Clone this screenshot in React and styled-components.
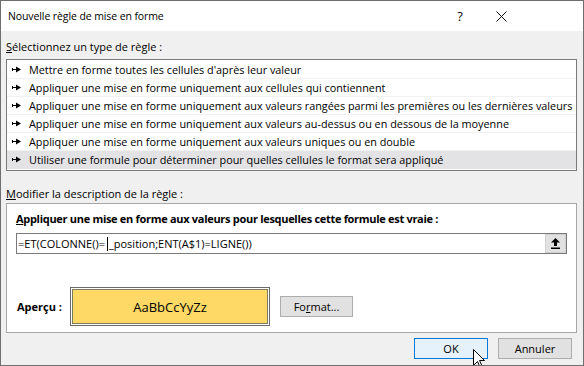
import React from "react";
import styled, { createGlobalStyle } from "styled-components";

const GlobalStyle = createGlobalStyle`
  html, body { margin: 0; padding: 0; background: #ffffff; }
  body {
    font-family: "Open Sans", "Noto Sans", sans-serif;
    font-size: 11px;
    color: #000000;
  }
  * { box-sizing: border-box; }
`;

const Dialog = styled.div`
  position: relative;
  width: 584px;
  height: 366px;
  border: 1px solid #6f6f6f;
  background: #f0f0f0;
  display: flex;
  flex-direction: column;
  overflow: hidden;
`;

const TitleBar = styled.div`
  height: 30px;
  flex: none;
  background: #ffffff;
  display: flex;
  align-items: center;
  padding-left: 7px;
  padding-right: 67px;
`;

const Title = styled.div`
  flex: 1;
  font-size: 10.5px;
  letter-spacing: -0.1px;
  white-space: nowrap;
`;

const TitleControls = styled.div`
  display: flex;
  align-items: center;
  gap: 11px;
`;

const TitleButton = styled.div`
  width: 30px;
  height: 30px;
  display: flex;
  align-items: center;
  justify-content: center;
  font-size: 13px;
  color: #111;
`;

const Body = styled.div`
  flex: 1;
  display: flex;
  flex-direction: column;
  padding: 0 6px 0 5px;
`;

const SectionLabel = styled.div`
  line-height: 16px;
  height: 16px;
  margin-top: ${(p) => p.$top}px;
  white-space: nowrap;
`;

const ListBox = styled.div`
  margin-top: 4px;
  height: 112px;
  border: 1px solid #7a7a7a;
  background: #ffffff;
  padding: 1px 0;
  display: flex;
  flex-direction: column;
  overflow: hidden;
`;

const ListRow = styled.div`
  height: 18px;
  flex: none;
  display: flex;
  align-items: center;
  gap: 8px;
  padding-left: 5px;
  white-space: nowrap;
  font-size: 10.85px;
  background: ${(p) => (p.$selected ? "#e3e3e6" : "transparent")};
  border-bottom: 1px solid ${(p) => (p.$last ? "transparent" : "#f1f1f1")};
`;

const RowArrow = styled.svg`
  flex: none;
`;

const GroupBox = styled.div`
  margin-top: 1px;
  height: 130px;
  border: 1px solid #a8a8a8;
  background: #ffffff;
  padding: 7px 9px 6px 9px;
  display: flex;
  flex-direction: column;
`;

const BoldLabel = styled.div`
  font-weight: 700;
  line-height: 16px;
  height: 16px;
  letter-spacing: -0.3px;
  white-space: nowrap;
`;

const FormulaInput = styled.div`
  margin-top: 6px;
  height: 21px;
  border: 1px solid #7a7a7a;
  display: flex;
  align-items: center;
`;

const FormulaText = styled.div`
  flex: 1;
  padding-left: 1px;
  white-space: nowrap;
  display: flex;
  align-items: center;
`;

const Caret = styled.span`
  display: inline-block;
  width: 1px;
  height: 14px;
  margin: 0 1px 0 2px;
  background: #000;
`;

const PickerButton = styled.div`
  width: 21px;
  height: 19px;
  background: #e1e1e1;
  border: 1px solid #d0d0d0;
  display: flex;
  align-items: center;
  justify-content: center;
`;

const PreviewRow = styled.div`
  margin-top: 33px;
  display: flex;
  align-items: center;
  padding-left: 1px;
`;

const PreviewLabel = styled.div`
  width: 53px;
  font-weight: 700;
  white-space: nowrap;
`;

const PreviewFrame = styled.div`
  width: 200px;
  height: 39px;
  border: 1px solid #6a6a6a;
  padding: 1px;
  background: #ffffff;
`;

const PreviewSwatch = styled.div`
  height: 100%;
  background: #ffd966;
  border: 1px solid #7c7c5c;
  display: flex;
  align-items: center;
  justify-content: center;
  font-size: 13px;
`;

const Button = styled.div`
  width: ${(p) => p.$width}px;
  height: 21px;
  margin-left: ${(p) => p.$ml || 0}px;
  border: 1px solid ${(p) => (p.$default ? "#0078d7" : "#adadad")};
  background: ${(p) => (p.$default ? "#e5f1fb" : "#e1e1e1")};
  display: flex;
  align-items: center;
  justify-content: center;
  white-space: nowrap;
`;

const Footer = styled.div`
  margin-top: 5px;
  display: flex;
  justify-content: flex-end;
  gap: 10px;
  padding-right: 5px;
`;

const Cursor = styled.svg`
  position: absolute;
  left: 472px;
  top: 348px;
`;

const Arrow = () => (
  <RowArrow width="9" height="7" viewBox="0 0 9 7">
    <rect x="0" y="2" width="1" height="3" fill="#000" />
    <rect x="0" y="3" width="5" height="1" fill="#000" />
    <polygon points="4,0.5 9,3.5 4,6.5" fill="#000" />
  </RowArrow>
);

const rules = [
  "Mettre en forme toutes les cellules d'après leur valeur",
  "Appliquer une mise en forme uniquement aux cellules qui contiennent",
  "Appliquer une mise en forme uniquement aux valeurs rangées parmi les premières ou les dernières valeurs",
  "Appliquer une mise en forme uniquement aux valeurs au-dessus ou en dessous de la moyenne",
  "Appliquer une mise en forme uniquement aux valeurs uniques ou en double",
  "Utiliser une formule pour déterminer pour quelles cellules le format sera appliqué",
];

export default function App() {
  return (
    <>
      <GlobalStyle />
      <Dialog>
        <TitleBar>
          <Title>Nouvelle règle de mise en forme</Title>
          <TitleControls>
            <TitleButton>?</TitleButton>
            <TitleButton>
              <svg width="11" height="11" viewBox="0 0 11 11">
                <path d="M0.5 0.5 L10.5 10.5 M10.5 0.5 L0.5 10.5" stroke="#111" strokeWidth="1" />
              </svg>
            </TitleButton>
          </TitleControls>
        </TitleBar>
        <Body>
          <SectionLabel $top={8}>
            <u>S</u>électionnez un type de règle :
          </SectionLabel>
          <ListBox>
            {rules.map((r, i) => (
              <ListRow key={i} $selected={i === rules.length - 1} $last={i === rules.length - 1}>
                <Arrow />
                <span>{r}</span>
              </ListRow>
            ))}
          </ListBox>
          <SectionLabel $top={15}>
            <u>M</u>odifier la description de la règle :
          </SectionLabel>
          <GroupBox>
            <BoldLabel>
              <u>A</u>ppliquer une mise en forme aux valeurs pour lesquelles cette formule est vraie :
            </BoldLabel>
            <FormulaInput>
              <FormulaText>
                <span>=ET(COLONNE()=</span>
                <Caret />
                <span>_position;ENT(A$1)=LIGNE())</span>
              </FormulaText>
              <PickerButton>
                <svg width="9" height="11" viewBox="0 0 9 11">
                  <polygon points="4.5,0 9,4.5 6,4.5 6,8 3,8 3,4.5 0,4.5" fill="#000" />
                  <rect x="0" y="9.5" width="9" height="1.5" fill="#000" />
                </svg>
              </PickerButton>
            </FormulaInput>
            <PreviewRow>
              <PreviewLabel>Aperçu :</PreviewLabel>
              <PreviewFrame>
                <PreviewSwatch>AaBbCcYyZz</PreviewSwatch>
              </PreviewFrame>
              <Button $width={73} $ml={10}>
                Fo<u>r</u>mat...
              </Button>
            </PreviewRow>
          </GroupBox>
          <Footer>
            <Button $width={74} $default>
              OK
            </Button>
            <Button $width={74}>Annuler</Button>
          </Footer>
        </Body>
        <Cursor width="13" height="20" viewBox="0 0 13 20">
          <path
            d="M0.5 0.5 L0.5 16.5 L4.5 12.5 L7.5 19 L9.5 18 L6.5 11.5 L11.5 11.5 Z"
            fill="#ffffff"
            stroke="#000000"
            strokeWidth="1"
          />
        </Cursor>
      </Dialog>
    </>
  );
}
